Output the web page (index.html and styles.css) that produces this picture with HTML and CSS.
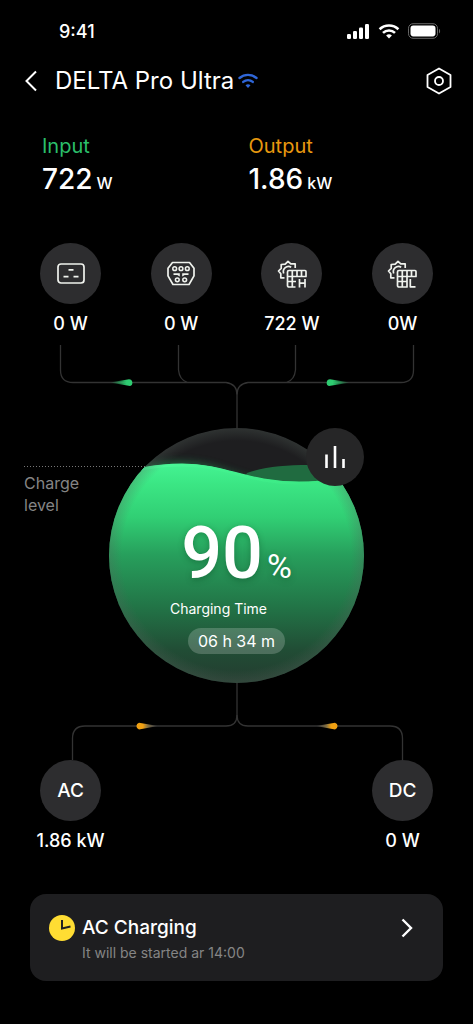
FILE: index.html
```html
<!DOCTYPE html>
<html lang="en">
<head>
<meta charset="utf-8">
<meta name="viewport" content="width=device-width, initial-scale=1">
<title>DELTA Pro Ultra</title>
<link rel="stylesheet" href="styles.css">
</head>
<body>
<div class="status">
  <span class="status-time">9:41</span>
  <svg class="status-icons" width="96" height="18" viewBox="0 0 96 18" aria-hidden="true">
    <g fill="#fff">
      <rect x="1" y="11" width="4" height="5" rx="1.2"/><rect x="7" y="8" width="4" height="8" rx="1.2"/><rect x="13" y="4.500" width="4" height="11.500" rx="1.200"/><rect x="19" y="1" width="4" height="15" rx="1.200"/>
      <path d="M43 12.300l-2.900-2.900a4.300 4.300 0 0 1 5.800 0L43 12.300z" transform="translate(0 3.200)"/>
    </g>
    <g fill="none" stroke="#fff" stroke-width="2.600">
      <path d="M33.600 6.300a13.500 13.500 0 0 1 18.800 0"/><path d="M37 9.900a8.700 8.700 0 0 1 12 0"/>
    </g>
    <rect x="62.500" y=".7" width="29" height="14.600" rx="4.500" fill="none" stroke="#666"/>
    <rect x="64.500" y="2.600" width="25" height="10.800" rx="2.800" fill="#fff"/>
    <path d="M93 5.700c1.500.7 1.500 4 0 4.700z" fill="#666"/>
  </svg>
</div>

<header class="header">
  <button class="icon-btn back" aria-label="Back">
    <svg width="14" height="22" viewBox="0 0 14 22"><path d="M12 1.500 2.500 11 12 20.500" fill="none" stroke="#fff" stroke-width="2"/></svg>
  </button>
  <h1 class="title">DELTA Pro Ultra</h1>
  <svg class="wifi" width="20" height="16" viewBox="0 0 20 16" aria-hidden="true">
    <g fill="none" stroke="#2f66d8" stroke-width="2.400" stroke-linecap="round"><path d="M1.500 5a13 13 0 0 1 17 0"/><path d="M5.200 8.900a7.500 7.500 0 0 1 9.600 0"/></g>
    <path d="M7.500 12.300a4 4 0 0 1 5 0L10 15z" fill="#2f66d8"/>
  </svg>
  <button class="icon-btn settings" aria-label="Settings">
    <svg width="26" height="28" viewBox="0 0 26 28"><g fill="none" stroke="#fff" stroke-width="1.800" stroke-linejoin="round"><path d="M13 1.500 24.500 8v12L13 26.500 1.500 20V8z"/><circle cx="13" cy="14" r="4"/></g></svg>
  </button>
</header>

<main class="main">
  <section class="totals">
    <div><div class="total-label input">Input</div><div class="total-value">722 <small>W</small></div></div>
    <div><div class="total-label output">Output</div><div class="total-value">1.86 <small>kW</small></div></div>
  </section>

  <section class="nodes">
    <div class="node">
      <span class="disc"><svg width="30" height="24" viewBox="0 0 30 24"><rect x="2" y="2" width="26" height="19" rx="3" fill="none" stroke="#f0f3ee" stroke-width="1.700"/><path d="M12.500 7.800h5M7.500 14.600h5M17.500 14.600h5" stroke="#f0f3ee" stroke-width="1.800"/></svg></span>
      <span class="node-value">0 W</span>
    </div>
    <div class="node">
      <span class="disc"><svg width="30" height="26" viewBox="0 0 30 26"><g fill="none" stroke="#f0f3ee" stroke-width="1.500"><path d="M6.500 1.500h17l4.500 5.700v7.600l-5 8.700H7l-5-8.700V7.200z" stroke-width="1.700" stroke-linejoin="round"/><circle cx="8.700" cy="7.700" r="1.900"/><circle cx="15" cy="7.700" r="1.900"/><circle cx="21.300" cy="7.700" r="1.900"/><circle cx="11.300" cy="18.800" r="1.900"/><circle cx="18.700" cy="18.800" r="1.900"/></g><path d="M7.500 12.200h6.300v3.300l-2.500-1.600H7.500zM22.500 12.200h-6.300v3.300l2.500-1.600h3.800z" fill="#f0f3ee"/></svg></span>
      <span class="node-value">0 W</span>
    </div>
    <div class="node">
      <span class="disc"><svg width="30" height="30" viewBox="0 0 30 30"><g class="panel"><path d="M7.500 18.800H3.800v-4L1.500 12l2.700-2.600V5.500l4-.3L11 2.300l2.800 2.600h4.400V9"/><path d="M6.700 14.500a5.200 5.200 0 0 1 7.500-6.300"/><path d="M12 11.500h16a1 1 0 0 1 1 1v5h-9M18.500 28H12a1.500 1.500 0 0 1-1.500-1.500V13a1.500 1.500 0 0 1 1.500-1.500M15.300 11.500V28M20 11.500v6M24.500 11.500v6M10.500 17.500H20M10.500 22.500h8.500"/><path d="M22.500 20v8.500M28 20v8.500M22.500 24.200H28"/></g></svg></span>
      <span class="node-value">722 W</span>
    </div>
    <div class="node">
      <span class="disc"><svg width="30" height="30" viewBox="0 0 30 30"><g class="panel"><path d="M7.500 18.800H3.800v-4L1.500 12l2.700-2.600V5.500l4-.3L11 2.300l2.800 2.600h4.400V9"/><path d="M6.700 14.500a5.200 5.200 0 0 1 7.500-6.300"/><path d="M12 11.500h16a1 1 0 0 1 1 1v5h-9M20 17.500V28h-8a1.500 1.500 0 0 1-1.500-1.500V13a1.500 1.500 0 0 1 1.500-1.500M15.300 11.500V28M20 11.500v6M24.500 11.500v6M10.500 17.500H20M10.500 22.500H20"/><path d="M23.300 20v7.800h5.200"/></g></svg></span>
      <span class="node-value">0W</span>
    </div>
  </section>

  <svg class="wires" viewBox="0 0 473 84" aria-hidden="true">
    <defs>
      <linearGradient id="gr"><stop offset="0" stop-color="#2ecc71" stop-opacity="0"/><stop offset=".75" stop-color="#2ecc71"/></linearGradient>
      <linearGradient id="gl"><stop offset=".25" stop-color="#2ecc71"/><stop offset="1" stop-color="#2ecc71" stop-opacity="0"/></linearGradient>
    </defs>
    <g class="wire"><path d="M60.500 1v25q0 12.500 12.500 12.500H226q11 1.500 11 12V84"/><path d="M178.500 1v25q1 10 9 12.500"/><path d="M413.500 1v25q0 12.500-12.500 12.500H248q-11 1.500-11 12"/><path d="M295.500 1v25q-1 10-9 12.500"/></g>
    <path d="M110 38.500 129 35.200a3.500 3.500 0 0 1 1 6.800z" fill="url(#gr)"/>
    <path d="M350 38.500 330 35.200a3.500 3.500 0 0 0-1 6.800z" fill="url(#gl)"/>
  </svg>

  <section class="level">
    <div class="level-note">Charge<br>level</div>
    <div class="gauge">
      <svg class="gauge-art" viewBox="0 0 255 255" aria-hidden="true">
        <defs>
          <clipPath id="ball"><circle cx="127.500" cy="127.500" r="127.500"/></clipPath>
          <linearGradient id="fill" gradientUnits="userSpaceOnUse" x1="0" y1="34" x2="0" y2="255">
            <stop offset="0" stop-color="#45f493"/><stop offset=".1" stop-color="#3be684"/><stop offset=".25" stop-color="#31cf74"/><stop offset=".42" stop-color="#279f5c"/><stop offset=".65" stop-color="#227547"/><stop offset=".85" stop-color="#214d35"/><stop offset="1" stop-color="#243c30"/>
          </linearGradient>
          <linearGradient id="crest" gradientUnits="userSpaceOnUse" x1="20" y1="0" x2="240" y2="0"><stop offset="0" stop-color="#4dfb9c"/><stop offset="1" stop-color="#36e47d"/></linearGradient>
          <radialGradient id="rim"><stop offset=".9" stop-color="#55625a" stop-opacity="0"/><stop offset="1" stop-color="#55625a" stop-opacity=".3"/></radialGradient>
          <filter id="soft" x="-20%" y="-50%" width="140%" height="200%"><feGaussianBlur stdDeviation="4"/></filter>
        </defs>
        <g clip-path="url(#ball)">
          <rect width="255" height="255" fill="#1e1e20"/>
          <path d="M0 48C45 31 80 30 115 42L150 54 0 60z" fill="#279256" opacity=".6" filter="url(#soft)"/>
          <path d="M138 45C155 39 175 37 200 37S240 42 255 46V80H120z" fill="#206b40"/>
          <path id="wave" d="M0 49C25 41 45 36 73 36 118 36 137 54 190 54 220 54 238 49 255 44V255H0z" fill="url(#fill)"/>
          <path d="M0 50C25 42 45 37 73 37 118 37 137 55 190 55 220 55 238 50 255 45" fill="none" stroke="url(#crest)" stroke-width="3"/>
          <circle cx="127.500" cy="127.500" r="127.500" fill="url(#rim)"/>
        </g>
      </svg>
      <div class="reading">
        <div class="percent">90<span>%</span></div>
        <div class="time-label">Charging Time</div>
        <div class="time">06 h 34 m</div>
      </div>
      <button class="chart-btn" aria-label="Statistics">
        <svg width="22" height="24" viewBox="0 0 22 24"><path d="M2.500 9.500V23M11 1v22M19.500 14v9" stroke="#fff" stroke-width="2.600"/></svg>
      </button>
    </div>
  </section>

  <svg class="wires" viewBox="0 0 473 77" aria-hidden="true">
    <defs>
      <linearGradient id="ol"><stop offset=".3" stop-color="#f0a012"/><stop offset=".5" stop-color="#8a733f"/><stop offset="1" stop-color="#777" stop-opacity="0"/></linearGradient>
      <linearGradient id="or"><stop offset="0" stop-color="#777" stop-opacity="0"/><stop offset=".5" stop-color="#8a733f"/><stop offset=".7" stop-color="#f0a012"/></linearGradient>
    </defs>
    <g class="wire"><path d="M237 0v32q0 11-11 11H85q-12.500 0-12.500 12.500V77"/><path d="M237 32q0 11 11 11h142q12.500 0 12.500 12.500V77"/></g>
    <path d="M158 43 139 39.800a3.400 3.400 0 0 0 0 6.600z" fill="url(#ol)"/>
    <path d="M316 43 335 39.800a3.400 3.400 0 0 1 0 6.600z" fill="url(#or)"/>
  </svg>

  <section class="nodes">
    <div class="node"><span class="disc">AC</span><span class="node-value">1.86 kW</span></div>
    <div class="node"><span class="disc">DC</span><span class="node-value">0 W</span></div>
  </section>

  <button class="card">
    <svg class="clock" width="26" height="26" viewBox="0 0 26 26" aria-hidden="true"><circle cx="13" cy="13" r="13" fill="#fd3"/><path d="M13 5v8.500l8.500-2" fill="none" stroke="#222" stroke-width="2"/></svg>
    <span class="card-text"><span class="card-title">AC Charging</span><span class="card-sub">It will be started ar 14:00</span></span>
    <svg class="chevron" width="12" height="20" viewBox="0 0 12 20" aria-hidden="true"><path d="M1.500 1.500 10 10l-8.500 8.500" fill="none" stroke="#fff" stroke-width="2.400"/></svg>
  </button>
</main>
</body>
</html>
```
FILE: styles.css
```css
* { box-sizing: border-box; }
body {
  margin: 0;
  background: #000;
  color: #fff;
  font-family: Inter, "Liberation Sans", sans-serif;
}
button {
  border: 0;
  padding: 0;
  background: none;
  color: inherit;
  font: inherit;
  cursor: pointer;
}
svg { display: block; flex: none; }

.status {
  display: flex;
  justify-content: space-between;
  align-items: center;
  padding: 20px 31px 0 59px;
}
.status-time { font-size: 18px; line-height: 24px; font-weight: 500; }

.header {
  display: flex;
  align-items: center;
  padding: 20px 21px 0 24px;
}
.title {
  margin: 0 4px 0 17px;
  font-size: 24px;
  line-height: 34px;
  font-weight: 400;
}
.settings { margin-left: auto; }

.totals {
  display: grid;
  grid-template-columns: 1fr 1fr;
  gap: 0 12px;
  padding: 34px 30px 0 42px;
}
.total-label { font-size: 20px; line-height: 28px; }
.input { color: #2bbf6a; }
.output { color: #e8990f; }
.total-value {
  display: flex;
  align-items: baseline;
  gap: 4px;
  font-size: 28px;
  line-height: 38px;
  font-weight: 500;
}
.total-value small { font-size: 16px; }

.nodes {
  display: flex;
  justify-content: space-between;
  padding: 0 40px;
}
.totals + .nodes { padding-top: 41px; }
.node {
  display: flex;
  flex-direction: column;
  align-items: center;
  width: 61px;
}
.disc {
  display: grid;
  place-items: center;
  width: 61px;
  height: 61px;
  border-radius: 50%;
  background: #2d2d2f;
  font-size: 19px;
  font-weight: 500;
}
.panel { fill: none; stroke: #f0f3ee; stroke-width: 1.7; stroke-linejoin: round; }
.node-value {
  padding-top: 8px;
  font-size: 18px;
  line-height: 24px;
  font-weight: 500;
  white-space: nowrap;
}

.wires { width: 100%; }
.nodes + .wires { margin-top: 8px; }
.wire { fill: none; stroke: #333; stroke-width: 1.3; }

.level {
  display: grid;
  grid-template-columns: 1fr auto 1fr;
}
.level-note {
  position: relative;
  padding: 44px 0 0 24px;
  color: #858585;
  font-size: 16px;
  line-height: 22px;
}
.level-note::before {
  content: "";
  position: absolute;
  z-index: 1;
  top: 38px;
  left: 24px;
  right: -36px;
  height: 1px;
  background: repeating-linear-gradient(90deg, #777 0 1px, transparent 1px 3px);
}
.gauge { position: relative; width: 255px; }
.gauge-art { width: 100%; }
.reading {
  position: absolute;
  inset: 0;
  display: flex;
  flex-direction: column;
  align-items: center;
  padding-top: 84px;
}
.percent {
  font-family: Roboto, sans-serif;
  font-size: 72px;
  line-height: 84px;
  font-weight: 500;
  text-shadow: 0 2px 6px rgba(0, 60, 25, .35);
}
.percent span { padding-left: 4px; font-size: 34px; font-weight: 400; }
.time-label {
  padding-right: 36px;
  font-size: 14px;
  line-height: 26px;
}
.time {
  margin-top: 6px;
  padding: 0 10px;
  border-radius: 13px;
  background: rgba(255, 255, 255, .2);
  font-size: 16px;
  line-height: 26px;
}
.percent { margin-bottom: -12px; }
.chart-btn {
  position: absolute;
  top: 0;
  right: 0;
  display: grid;
  place-items: center;
  width: 58px;
  height: 58px;
  border-radius: 50%;
  background: #262627;
}

.card {
  display: flex;
  align-items: flex-start;
  width: calc(100% - 60px);
  margin: 41px 30px 40px;
  padding: 21px 30px 17px 19px;
  border-radius: 16px;
  background: #1e1e20;
  text-align: left;
}
.card-text { flex: 1; padding-left: 7px; }
.card-title, .card-sub { display: block; }
.card-title { font-size: 19px; line-height: 26px; font-weight: 500; }
.card-sub { color: #858585; font-size: 14px; line-height: 23px; }
.chevron { margin-top: 3px; }
```
